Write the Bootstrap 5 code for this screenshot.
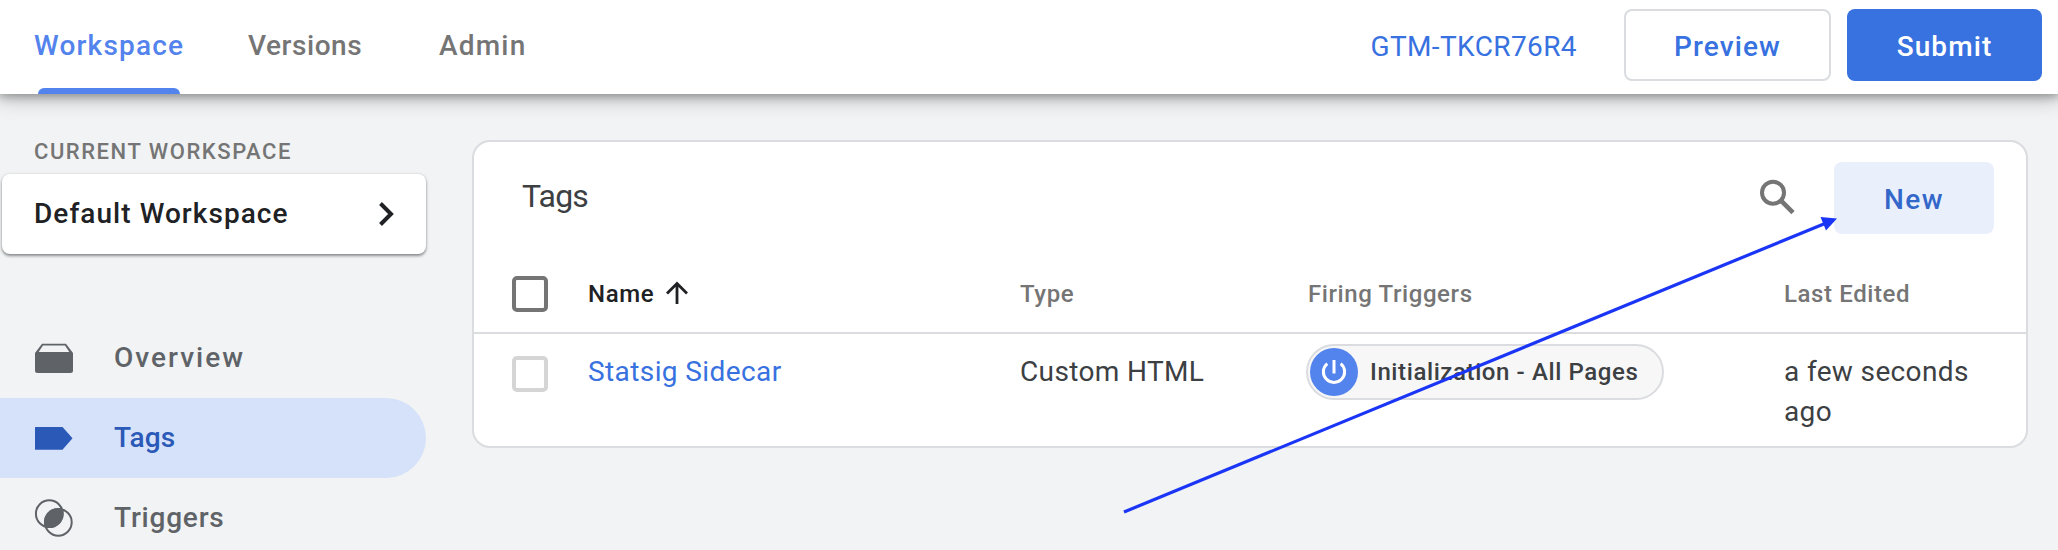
<!DOCTYPE html>
<html lang="en">
<head>
<meta charset="utf-8">
<meta name="viewport" content="width=device-width, initial-scale=1">
<title>Tag Manager - Tags</title>
<link href="https://cdn.jsdelivr.net/npm/bootstrap@5.3.0/dist/css/bootstrap.min.css" rel="stylesheet">
<style>
html,body{height:550px;overflow:hidden}
body{font-family:Roboto,"Liberation Sans",sans-serif;background:#f1f3f4;font-size:28px;line-height:40px;color:#3c4043;position:relative}
.topbar{height:94px;background:#fff;box-shadow:0 0 20px 3px rgba(0,0,0,.3),0 0 10px 1px rgba(0,0,0,.32);position:relative;z-index:1}
.tabs{margin-left:34px}
.tab{height:94px;line-height:92px;padding:0;color:#757575;font-weight:500;position:relative;white-space:nowrap}
.tab-workspace{width:214px;letter-spacing:1.2px}
.tab-versions{width:191px;letter-spacing:.55px}
.tab-admin{letter-spacing:1.2px}
.tab.active{color:#5383ec}
.tab.active::after{content:"";position:absolute;left:4px;width:142px;bottom:0;height:6px;border-radius:6px 6px 0 0;background:#5383ec}
.actions{height:90px;margin-right:16px}
.gbtn{height:72px;border-radius:8px;font-size:28px;font-weight:500;padding:4px 0 0;line-height:1;white-space:nowrap;border-width:2px;letter-spacing:1.1px}
.gbtn-preview{width:207px;border-color:#dadce0;color:#3871e0;background:#fff}
.gbtn-submit{width:195px;background:#3871e0;color:#fff}
.gbtn-new{width:160px;background:#e9f0fc;color:#3367c9;margin-top:20px;letter-spacing:1.5px}
.cid{color:#3871e0;letter-spacing:.4px}
.container-id{margin-right:47px;padding-top:3px}
.side{width:426px}
.side-label{font-size:22px;font-weight:500;color:#757575;line-height:30px;padding:43px 0 7px 34px;letter-spacing:1.54px}
.ws{margin-left:2px;height:80px;border-radius:8px;background:#fff;box-shadow:0 2px 3px rgba(60,64,67,.55),0 0 3px rgba(60,64,67,.15);font-weight:500;color:#202124;padding:0 31px 0 32px;letter-spacing:1.05px}
.menu{margin-top:64px}
.item{height:80px;padding:0 0 0 34px;gap:40px;color:#5f6368;font-weight:500;letter-spacing:.8px}
.item-overview{letter-spacing:2px}
.item.active{background:#d6e2fa;color:#2a59b8;border-radius:0 40px 40px 0;letter-spacing:.2px}
.panel{margin:46px 30px 0 46px;height:308px;background:#fff;border:2px solid #dadce0;border-radius:18px}
.panel-top{height:132px;padding:0 32px 0 48px}
.title{font-size:32px;line-height:40px;margin-top:34px;letter-spacing:-.8px}
.search{margin:36px 38px 0 0}
.tags{width:1552px;table-layout:fixed;margin:0;border-collapse:separate;border-spacing:0;letter-spacing:.36px}
.tags th,.tags td{padding:0;border:0}
.tags th{height:60px;font-size:24px;font-weight:500;color:#757575;vertical-align:top;line-height:40px;letter-spacing:.6px;border-bottom:2px solid #dadce0}
.tags th.sorted{color:#202124}
.sorted svg{margin:-6px 0 0 11px}
.tags td{vertical-align:top;padding-top:18px}
.box{width:36px;height:36px;border:4px solid #757575;border-radius:5px;margin:2px 0 0 38px}
.box.pale{border-color:#d5d5d5;margin-top:4px}
.chip{height:56px;width:358px;border:2px solid #dadce0;border-radius:28px;background:#f7f7f7;padding-left:2px;font-size:24px;font-weight:500;gap:12px;margin-top:-8px;letter-spacing:.6px;white-space:nowrap}
.pointer{position:absolute;left:0;top:0;z-index:5;pointer-events:none}
</style>
</head>
<body>
<header class="topbar d-flex">
  <nav class="tabs d-flex">
    <a class="nav-link tab tab-workspace active">Workspace</a>
    <a class="nav-link tab tab-versions">Versions</a>
    <a class="nav-link tab tab-admin">Admin</a>
  </nav>
  <div class="actions d-flex align-items-center ms-auto">
    <span class="cid container-id">GTM-TKCR76R4</span>
    <button class="btn gbtn gbtn-preview me-3">Preview</button>
    <button class="btn gbtn gbtn-submit">Submit</button>
  </div>
</header>
<div class="d-flex">
  <aside class="side flex-shrink-0">
    <div class="side-label">CURRENT WORKSPACE</div>
    <div class="ws d-flex align-items-center justify-content-between">Default Workspace
      <svg width="18" height="28" viewBox="0 0 18 28" fill="none" stroke="#202124" stroke-width="4"><path d="M3.500 3.500 14 14 3.500 24.500"/></svg></div>
    <nav class="menu d-flex flex-column">
      <a class="item item-overview nav-link d-flex align-items-center">
        <svg width="40" height="40" viewBox="0 0 40 40"><path d="M1 15 8 5.800h24L39 15v17.500a2.500 2.500 0 0 1-2.500 2.500h-33A2.500 2.500 0 0 1 1 32.500z" fill="#5f6368"/><path d="M4.700 14 9 7.500h22L35.300 14z" fill="#f1f3f4"/></svg>
        Overview</a>
      <a class="item nav-link active d-flex align-items-center">
        <svg width="40" height="40" viewBox="0 0 40 40"><path d="M1 9h27.500L38.500 20.300 28.500 31.700H1z" fill="#2a59b8"/></svg>
        Tags</a>
      <a class="item nav-link d-flex align-items-center">
        <svg width="40" height="40" viewBox="0 0 40 40"><defs><clipPath id="lens"><circle cx="15.300" cy="15.700" r="14.200"/></clipPath></defs><circle cx="24.300" cy="24.300" r="14.200" fill="#5f6368" clip-path="url(#lens)"/><g fill="none" stroke="#5f6368" stroke-width="2"><circle cx="15.300" cy="15.700" r="13.400"/><circle cx="24.300" cy="24.300" r="13.400"/></g></svg>
        Triggers</a>
    </nav>
  </aside>
  <main class="panel flex-grow-1">
    <div class="panel-top d-flex">
      <div class="title">Tags</div>
      <svg class="search ms-auto" width="38" height="38" viewBox="0 0 38 38" fill="none" stroke="#757575"><circle cx="15" cy="14.700" r="11" stroke-width="4"/><path d="M23 22.700 35 34.700" stroke-width="4.600"/></svg>
      <button class="btn gbtn gbtn-new">New</button>
    </div>
    <table class="tags">
      <colgroup><col style="width:114px"><col style="width:432px"><col style="width:286px"><col style="width:478px"><col style="width:242px"></colgroup>
      <tr>
        <th><div class="box"></div></th>
        <th class="sorted">Name<svg width="24" height="24" viewBox="0 0 24 24" fill="none" stroke="#202124" stroke-width="2.800"><path d="M12 23V3M2 12.500 12 2.500l10 10"/></svg></th>
        <th>Type</th>
        <th style="padding-left:2px">Firing Triggers</th>
        <th>Last Edited</th>
      </tr>
      <tr>
        <td><div class="box pale"></div></td>
        <td><span class="cid">Statsig Sidecar</span></td>
        <td>Custom HTML</td>
        <td><div class="chip d-flex align-items-center">
          <svg width="48" height="48" viewBox="0 0 48 48"><circle cx="24" cy="24" r="24" fill="#5383ec"/><path d="M17.300 15.600A10.600 10.600 0 1 0 30.700 15.600M24 12v13.500" fill="none" stroke="#fff" stroke-width="3"/></svg>
          Initialization - All Pages</div></td>
        <td>a few seconds<br>ago</td>
      </tr>
    </table>
  </main>
</div>
<svg class="pointer" width="2058" height="550" viewBox="0 0 2058 550"><path d="M1124 512 1825 223.400" stroke="#1a35f5" stroke-width="3.200"/><path d="M1837 218.500 1820.500 217 1826 230.500z" fill="#1a35f5"/></svg>
<script src="https://cdn.jsdelivr.net/npm/bootstrap@5.3.0/dist/js/bootstrap.bundle.min.js"></script>
</body>
</html>
